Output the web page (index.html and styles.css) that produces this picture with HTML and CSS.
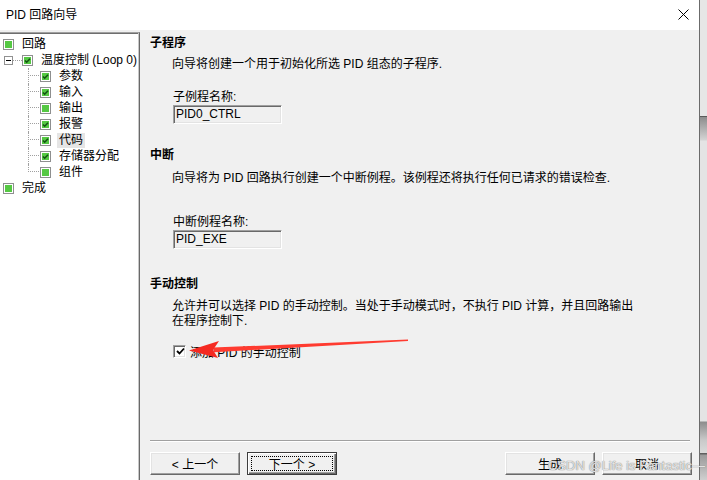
FILE: index.html
```html
<!DOCTYPE html>
<html lang="zh-CN">
  <head>
    <meta charset="utf-8" />
    <title>PID 回路向导</title>
    <link rel="stylesheet" href="styles.css">
  </head>
  <body>
    <!-- shared checkbox glyphs for the tree -->
    <svg class="defs" width="0" height="0">
      <symbol id="cb-off" viewBox="0 0 11 11">
        <rect x="0.5" y="0.5" width="10" height="10" fill="#fff" stroke="#8e8f8f" />
        <rect x="2" y="2" width="7" height="7" fill="#55c843" />
      </symbol>
      <symbol id="cb-on" viewBox="0 0 11 11">
        <rect x="0.5" y="0.5" width="10" height="10" fill="#fff" stroke="#8e8f8f" />
        <rect x="2" y="2" width="7" height="7" fill="#55c843" />
        <path d="M3 5.5 L4.7 7.2 L8 3.8" fill="none" stroke="#145214" stroke-width="1.6" />
      </symbol>
    </svg>

    <div class="screen">
      <div class="dialog">
        <div class="titlebar">
          <span class="title">PID 回路向导</span>
          <svg class="close" width="11" height="11" viewBox="0 0 11 11">
            <path d="M0.5 0.5 L10.5 10.5 M10.5 0.5 L0.5 10.5" stroke="#000" stroke-width="1" />
          </svg>
        </div>

        <div class="main">
          <!-- wizard steps -->
          <div class="tree">
            <div class="node l0">
              <svg class="cb"><use href="#cb-off" /></svg><span class="label">回路</span>
            </div>
            <div class="node l1">
              <span class="expander"></span><span class="stub"></span>
              <svg class="cb"><use href="#cb-on" /></svg><span class="label">温度控制 (Loop 0)</span>
            </div>
            <div class="node l2">
              <span class="conn"></span><svg class="cb"><use href="#cb-on" /></svg><span class="label">参数</span>
            </div>
            <div class="node l2">
              <span class="conn"></span><svg class="cb"><use href="#cb-on" /></svg><span class="label">输入</span>
            </div>
            <div class="node l2">
              <span class="conn"></span><svg class="cb"><use href="#cb-off" /></svg><span class="label">输出</span>
            </div>
            <div class="node l2">
              <span class="conn"></span><svg class="cb"><use href="#cb-on" /></svg><span class="label">报警</span>
            </div>
            <div class="node l2">
              <span class="conn"></span><svg class="cb"><use href="#cb-on" /></svg><span class="label selected">代码</span>
            </div>
            <div class="node l2">
              <span class="conn"></span><svg class="cb"><use href="#cb-on" /></svg><span class="label">存储器分配</span>
            </div>
            <div class="node l2 last">
              <span class="conn"></span><svg class="cb"><use href="#cb-off" /></svg><span class="label">组件</span>
            </div>
            <div class="node l0">
              <svg class="cb"><use href="#cb-off" /></svg><span class="label">完成</span>
            </div>
          </div>

          <!-- step page -->
          <div class="content">
            <div class="heading">子程序</div>
            <div class="desc gap-6">向导将创建一个用于初始化所选 PID 组态的子程序.</div>
            <div class="field-label gap-18">子例程名称:</div>
            <div class="field">PID0_CTRL</div>

            <div class="heading gap-23">中断</div>
            <div class="desc gap-8">向导将为 PID 回路执行创建一个中断例程。该例程还将执行任何已请求的错误检查.</div>
            <div class="field-label gap-29">中断例程名称:</div>
            <div class="field">PID_EXE</div>

            <div class="heading gap-27">手动控制</div>
            <div class="desc gap-7">允许并可以选择 PID 的手动控制。当处于手动模式时，不执行 PID 计算，并且回路输出<br>在程序控制下.</div>
            <label class="check-row">
              <span class="check-box">
                <svg width="9" height="9" viewBox="0 0 9 9"><path d="M1 4 L3.5 6.5 L8 1.5" fill="none" stroke="#000" stroke-width="1.8" /></svg>
              </span>
              <span>添加 PID 的手动控制</span>
            </label>

            <div class="footer">
              <div class="separator"></div>
              <div class="buttons">
                <button class="btn">&lt; 上一个</button>
                <button class="btn default"><span class="focus">下一个 &gt;</span></button>
                <span class="spacer"></span>
                <button class="btn">生成</button>
                <button class="btn">取消</button>
              </div>
            </div>
          </div>
        </div>
      </div>
      <div class="backdrop"></div>
    </div>

    <!-- annotation drawn over the screenshot -->
    <svg class="arrow" width="707" height="480" viewBox="0 0 707 480">
      <polygon points="408,339.6 408,341 214,352.2 213,347.6" fill="#ff3b30" />
      <polygon points="189,350.5 219,341 213,350 218,358" fill="#f52a22" />
    </svg>
    <div class="watermark">CSDN @Life is Fantastic—</div>
  </body>
</html>
```

FILE: styles.css
```css
* {
  margin: 0;
  padding: 0;
  box-sizing: border-box;
}

body {
  width: 707px;
  height: 480px;
  overflow: hidden;
  position: relative;
  font-family: 'Liberation Sans', 'Noto Sans CJK SC', sans-serif;
  font-size: 12px;
  color: #000;
  background: #f0f0f0;
}

.defs {
  position: absolute;
}

.screen {
  display: flex;
  height: 480px;
}

.dialog {
  width: 700px;
  display: flex;
  flex-direction: column;
  border-right: 1px solid #6b6b6b;
  background: #f0f0f0;
}

.backdrop {
  flex: 1;
  background:
    linear-gradient(#e6e6e6 0, #e6e6e6 116px, #5a5a5a 116px, #5a5a5a 117px,
      #8c8c8c 117px, #d4d4d4 140px, #e4e4e4 141px, #e4e4e4 421px,
      #8d8d8d 422px, #c9c9c9 440px, #dadada 453px, #5f5f5f 453px,
      #5f5f5f 454px, #9a9a9a 455px, #cfcfcf 480px);
}

/* title bar */
.titlebar {
  height: 30px;
  background: #fff;
  display: flex;
  align-items: center;
  justify-content: space-between;
  padding: 0 10px 1px 6px;
}

.title {
  line-height: 16px;
}

.close {
  display: block;
  margin-top: -1px;
}

.main {
  flex: 1;
  display: flex;
  padding-top: 2px;
}

/* step tree */
.tree {
  width: 140px;
  background: #fff;
  border-top: 1px solid #a0a0a0;
  border-right: 1px solid #696969;
  box-shadow: inset -1px 0 0 #c8c8c8, inset 0 1px 0 #6e6e6e;
  padding-top: 3px;
}

.node {
  display: flex;
  align-items: center;
  height: 16px;
  white-space: nowrap;
}

.node.l0 {
  padding-left: 3px;
}

.node.l1 {
  padding-left: 4px;
}

.node.l2 {
  padding-left: 28px;
}

.cb {
  width: 11px;
  height: 11px;
  flex: none;
  margin-right: 6px;
}

.label {
  padding: 0 2px;
  line-height: 15px;
}

.label.selected {
  background: #e5e5e5;
}

.expander {
  position: relative;
  width: 9px;
  height: 9px;
  border: 1px solid #919191;
  background: #fff;
  flex: none;
}

.expander::after {
  content: '';
  position: absolute;
  left: 1px;
  top: 3px;
  width: 5px;
  height: 1px;
  background: #000;
}

.stub {
  width: 9px;
  height: 1px;
  background: repeating-linear-gradient(90deg, #a0a0a0 0 1px, transparent 1px 2px);
  flex: none;
}

.conn {
  width: 12px;
  height: 16px;
  flex: none;
  border-left: 1px dotted #a0a0a0;
  background: repeating-linear-gradient(90deg, #a0a0a0 0 1px, transparent 1px 2px) no-repeat 1px 7px / 10px 1px;
}

.node.last .conn {
  align-self: flex-start;
  height: 8px;
}

/* page content */
.content {
  flex: 1;
  display: flex;
  flex-direction: column;
  padding: 3px 9px 0 10px;
}

.heading {
  font-weight: bold;
  line-height: 16px;
  height: 16px;
}

.desc {
  margin-left: 22px;
  line-height: 15px;
}

.field-label {
  margin-left: 23px;
  line-height: 15px;
}

.gap-6 { margin-top: 6px; }
.gap-7 { margin-top: 7px; }
.gap-8 { margin-top: 8px; }
.gap-18 { margin-top: 18px; }
.gap-23 { margin-top: 23px; }
.gap-27 { margin-top: 27px; }
.gap-29 { margin-top: 29px; }

.field {
  margin-left: 23px;
  width: 109px;
  height: 19px;
  line-height: 15px;
  padding-left: 2px;
  border: 1px solid;
  border-color: #a0a0a0 #fff #fff #a0a0a0;
  box-shadow: inset 1px 1px 0 #696969, inset -1px -1px 0 #e3e3e3;
  background: #f0f0f0;
  padding-top: 1px;
}

.check-row {
  margin: 14px 0 0 23px;
  display: flex;
  align-items: center;
  height: 16px;
  gap: 4px;
}

.check-box {
  width: 13px;
  height: 13px;
  background: #fff;
  border: 1px solid;
  border-color: #a0a0a0 #fff #fff #a0a0a0;
  box-shadow: inset 1px 1px 0 #696969, inset -1px -1px 0 #e3e3e3;
  display: flex;
  align-items: center;
  justify-content: center;
}

.check-box svg {
  display: block;
  margin: 0 0 0 1px;
}

/* buttons */
.footer {
  margin-top: auto;
}

.separator {
  height: 2px;
  border-top: 1px solid #a0a0a0;
  border-bottom: 1px solid #fff;
}

.buttons {
  display: flex;
  margin-top: 10px;
  margin-right: -2px;
  height: 28px;
  gap: 5px;
}

.spacer {
  flex: 1;
}

.btn {
  width: 90px;
  height: 23px;
  font: inherit;
  color: #000;
  background: #f0f0f0;
  border: 1px solid;
  border-color: #fff #696969 #696969 #fff;
  box-shadow: inset -1px -1px 0 #a0a0a0, inset 1px 1px 0 #e3e3e3;
  display: flex;
  align-items: center;
  justify-content: center;
}

.btn + .btn {
  margin-left: 2px;
}

.btn.default {
  border: 1px solid #3c3c3c;
  box-shadow: inset 1px 1px 0 #fff, inset -1px -1px 0 #696969, inset -2px -2px 0 #a0a0a0;
  padding: 3px;
}

.focus {
  width: 100%;
  height: 100%;
  border: 1px dotted #000;
  display: flex;
  align-items: center;
  justify-content: center;
}

/* overlays */
.arrow {
  position: absolute;
  left: 0;
  top: 0;
  pointer-events: none;
}

.watermark {
  position: absolute;
  left: 548px;
  top: 458px;
  font-size: 13px;
  line-height: 16px;
  color: rgba(255, 255, 255, 0.75);
  text-shadow: 0 0 1px #8a8a8a, 0 0 1px #8a8a8a;
  white-space: nowrap;
}
```
